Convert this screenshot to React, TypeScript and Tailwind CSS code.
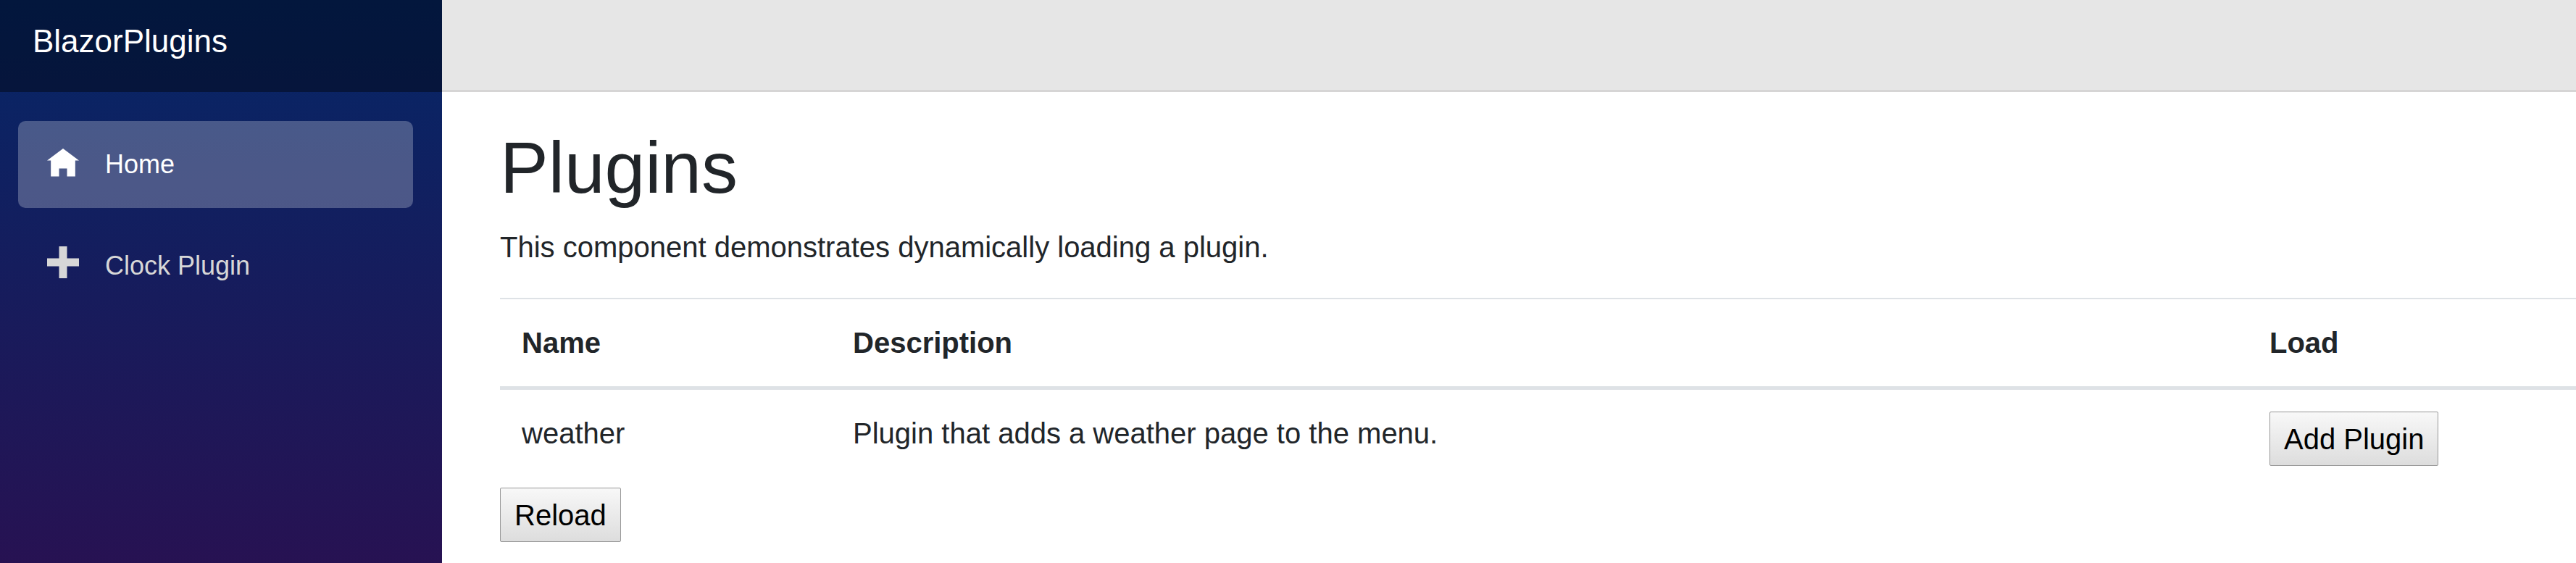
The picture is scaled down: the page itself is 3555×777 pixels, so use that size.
const navItems = [
  {
    label: "Home",
    active: true,
    icon: (
      <svg className="h-[44px] w-[44px]" viewBox="0 0 8 8" fill="currentColor" aria-hidden="true">
        <path d="M4 0L0 3h.94v4H3V5h2v2h2.06V3H8L4 0z" />
      </svg>
    ),
  },
  {
    label: "Clock Plugin",
    active: false,
    icon: (
      <svg className="h-[55px] w-[44px]" viewBox="0 0 8 10" fill="currentColor" aria-hidden="true">
        <path d="M3 0v3H0v2h3v3h2V5h3V3H5V0H3z" />
      </svg>
    ),
  },
];

const plugins = [
  { name: "weather", description: "Plugin that adds a weather page to the menu." },
];

function Button({ children }: { children: string }) {
  return (
    <button
      type="button"
      className="block rounded-[2px] border border-[#989898] bg-linear-to-b from-[#f8f8f8] to-[#dddddd] px-[19px] pt-[7px] pb-[5px] leading-[61px] text-black"
    >
      {children}
    </button>
  );
}

function Sidebar() {
  return (
    <aside className="w-[610px] shrink-0 bg-[linear-gradient(180deg,#052767_0%,#3a0647_156%)]">
      <div className="bg-black/40 pt-6 pr-10 pb-[37px] pl-[45px]">
        <a href="#" className="text-[44px] leading-[66px] text-white">
          BlazorPlugins
        </a>
      </div>
      <nav className="pt-10 pr-10 pl-[25px]">
        <ul className="flex flex-col gap-5 text-[36px]">
          {navItems.map((item) => (
            <li key={item.label}>
              <a
                href="#"
                aria-current={item.active ? "page" : undefined}
                className={
                  item.active
                    ? "flex h-[120px] items-center rounded-[10px] bg-white/25 px-10 text-white"
                    : "flex h-[120px] items-center rounded-[10px] px-10 text-[#d7d7d7]"
                }
              >
                <span className="w-20 shrink-0">{item.icon}</span>
                {item.label}
              </a>
            </li>
          ))}
        </ul>
      </nav>
    </aside>
  );
}

export default function App() {
  return (
    <div className="flex min-h-screen bg-white font-['Liberation_Sans',Arial,sans-serif] text-[40px] leading-[60px] text-[#212529]">
      <Sidebar />
      <div className="min-w-0 flex-1">
        <header className="h-[127px] border-b-3 border-[#d6d5d5] bg-[#e6e6e6]" />
        <main className="pt-11 pl-20">
          <h1 className="mb-5 text-[100px] leading-[120px]">Plugins</h1>
          <p className="mb-10">This component demonstrates dynamically loading a plugin.</p>
          <table className="w-full table-fixed border-separate border-spacing-0 text-left">
            <thead>
              <tr>
                <th className="w-[457px] border-t-2 border-b-5 border-[#dee2e6] p-[30px] font-bold">Name</th>
                <th className="border-t-2 border-b-5 border-[#dee2e6] p-[30px] font-bold">Description</th>
                <th className="w-[453px] border-t-2 border-b-5 border-[#dee2e6] p-[30px] font-bold">Load</th>
              </tr>
            </thead>
            <tbody>
              {plugins.map((plugin) => (
                <tr key={plugin.name} className="align-top">
                  <td className="p-[30px]">{plugin.name}</td>
                  <td className="p-[30px]">{plugin.description}</td>
                  <td className="p-[30px]">
                    <Button>Add Plugin</Button>
                  </td>
                </tr>
              ))}
            </tbody>
          </table>
          <Button>Reload</Button>
        </main>
      </div>
    </div>
  );
}
